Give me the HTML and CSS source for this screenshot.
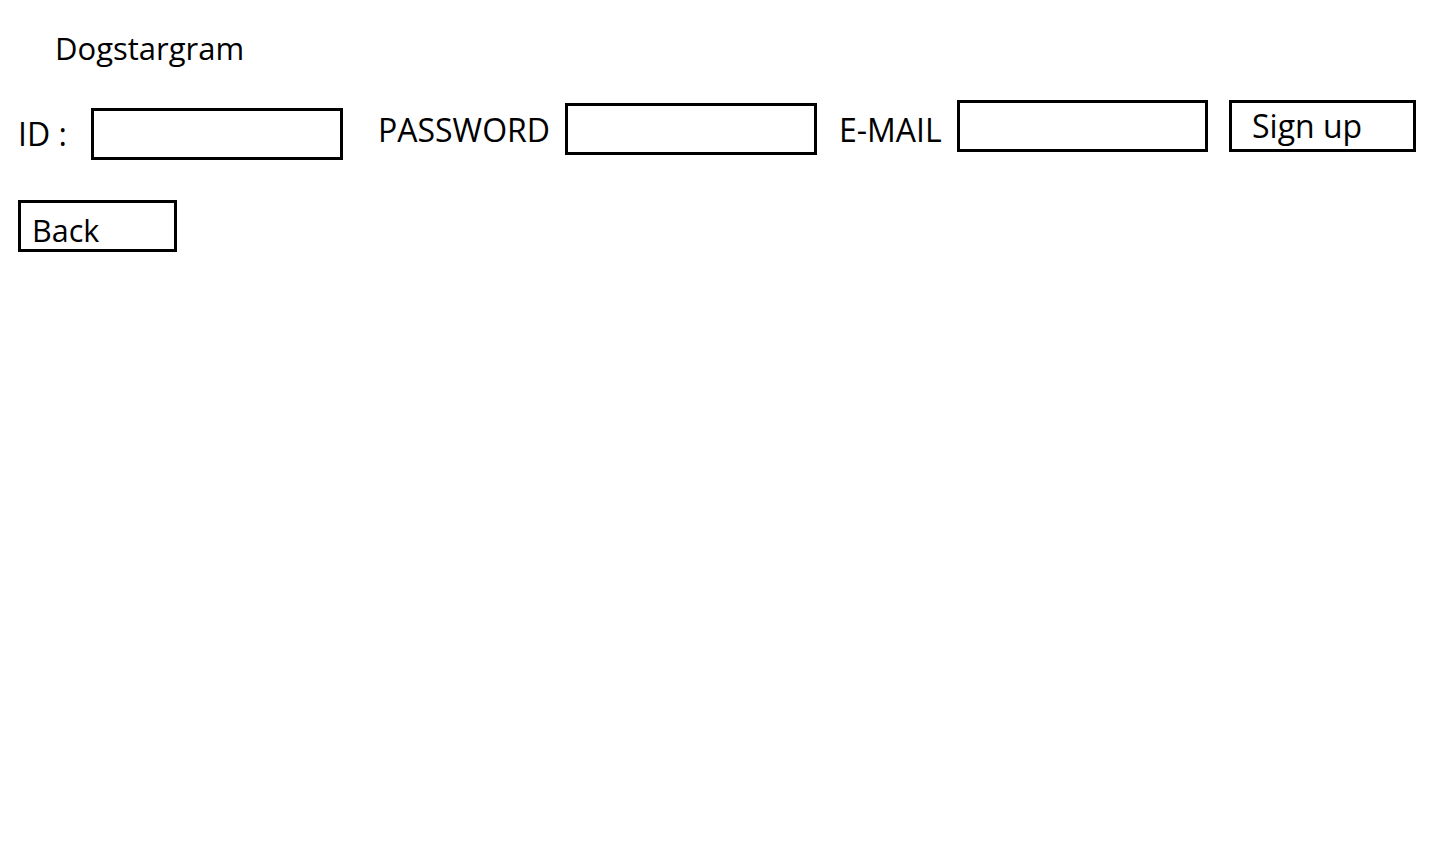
FILE: index.html
```html
<!DOCTYPE html>
<html lang="en">
<head>
<meta charset="utf-8">
<title>Dogstargram - Sign up</title>
<link rel="stylesheet" href="styles.css">
</head>
<body>
<div class="page">
  <h1 class="title">Dogstargram</h1>
  <form class="signup-row">
    <label class="label label-id" for="id">ID :</label>
    <input class="field field-id" id="id" type="text">
    <label class="label label-pw" for="pw">PASSWORD</label>
    <input class="field field-pw" id="pw" type="password">
    <label class="label label-mail" for="mail">E-MAIL</label>
    <input class="field field-mail" id="mail" type="email">
    <button class="btn btn-signup" type="button">Sign up</button>
  </form>
  <button class="btn btn-back" type="button">Back</button>
</div>
</body>
</html>
```

FILE: styles.css
```css
html, body {
  margin: 0;
  padding: 0;
  background: #ffffff;
}

body {
  font-family: "Open Sans", "Noto Sans", "Liberation Sans", sans-serif;
  color: #000000;
}

.page {
  padding: 0 18px;
}

.title {
  margin: 27px 0 0 37px;
  font-size: 31px;
  font-weight: 400;
  line-height: 42px;
}

.signup-row {
  display: flex;
  align-items: flex-start;
  margin-top: 31px;
}

.signup-row > * {
  flex-shrink: 0;
}

.label {
  font-size: 32px;
  line-height: 42px;
  white-space: nowrap;
}

.label-id {
  width: 73px;
  margin-top: 13px;
  word-spacing: 0;
}

.label-pw {
  width: 187px;
  margin-left: 35px;
  margin-top: 9px;
}

.label-mail {
  width: 118px;
  margin-left: 22px;
  margin-top: 9px;
}

.field {
  box-sizing: border-box;
  width: 252px;
  height: 52px;
  margin: 0;
  padding: 0 8px;
  border: 3px solid #000000;
  border-radius: 0;
  background: #ffffff;
  font-family: inherit;
  font-size: 24px;
  outline: none;
}

.field-id {
  margin-top: 8px;
}

.field-pw {
  margin-top: 3px;
}

.field-mail {
  margin-top: 0;
  width: 251px;
}

.btn {
  box-sizing: border-box;
  height: 52px;
  margin: 0;
  border: 3px solid #000000;
  border-radius: 0;
  background: #ffffff;
  color: #000000;
  font-family: inherit;
  font-size: 32px;
  line-height: 36px;
  text-align: left;
  cursor: pointer;
}

.btn-signup {
  width: 187px;
  margin-left: 21px;
  padding: 0 0 0 20px;
}

.btn-back {
  display: block;
  width: 159px;
  margin-top: 40px;
  padding: 8px 0 0 11px;
  font-size: 30.5px;
}
```
